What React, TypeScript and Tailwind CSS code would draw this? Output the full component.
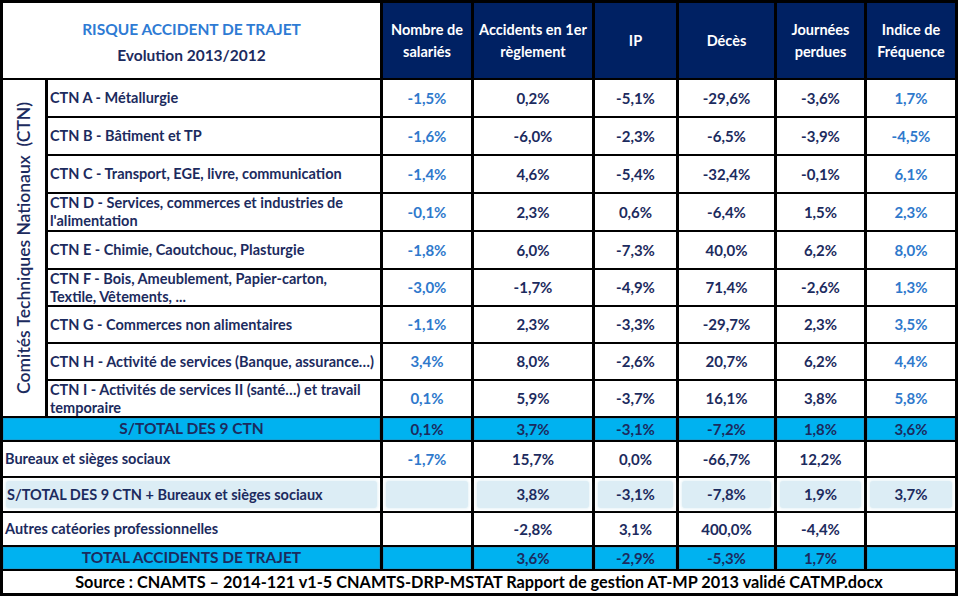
import { Fragment } from "react"

const navy = "text-[#1c2b5e]"

type Row = { name: string; values: string[] }

const ctnRows: Row[] = [
  { name: "CTN A - Métallurgie", values: ["-1,5%", "0,2%", "-5,1%", "-29,6%", "-3,6%", "1,7%"] },
  { name: "CTN B - Bâtiment et TP", values: ["-1,6%", "-6,0%", "-2,3%", "-6,5%", "-3,9%", "-4,5%"] },
  { name: "CTN C - Transport, EGE, livre, communication", values: ["-1,4%", "4,6%", "-5,4%", "-32,4%", "-0,1%", "6,1%"] },
  {
    name: "CTN D - Services, commerces et industries de l'alimentation",
    values: ["-0,1%", "2,3%", "0,6%", "-6,4%", "1,5%", "2,3%"],
  },
  { name: "CTN E - Chimie, Caoutchouc, Plasturgie", values: ["-1,8%", "6,0%", "-7,3%", "40,0%", "6,2%", "8,0%"] },
  {
    name: "CTN F - Bois, Ameublement, Papier-carton, Textile, Vêtements, ...",
    values: ["-3,0%", "-1,7%", "-4,9%", "71,4%", "-2,6%", "1,3%"],
  },
  { name: "CTN G - Commerces non alimentaires", values: ["-1,1%", "2,3%", "-3,3%", "-29,7%", "2,3%", "3,5%"] },
  {
    name: "CTN H - Activité de services (Banque, assurance…)",
    values: ["3,4%", "8,0%", "-2,6%", "20,7%", "6,2%", "4,4%"],
  },
  {
    name: "CTN I - Activités de services II (santé…) et travail temporaire",
    values: ["0,1%", "5,9%", "-3,7%", "16,1%", "3,8%", "5,8%"],
  },
]

const headers = ["Nombre de salariés", "Accidents en 1er règlement", "IP", "Décès", "Journées perdues", "Indice de Fréquence"]

function Cyan({ children, label }: { children?: React.ReactNode; label?: boolean }) {
  return (
    <div
      className={`${label ? "col-span-2 text-[15.5px]" : "text-[15px]"} flex items-center justify-center bg-[#00b2f0] border border-[#159fd3] font-bold ${navy}`}
    >
      {children}
    </div>
  )
}

function Light({ children, label }: { children?: React.ReactNode; label?: boolean }) {
  return (
    <div className={`${label ? "col-span-2" : ""} bg-white p-[3px] flex`}>
      <div
        className={`flex-1 flex items-center ${label ? "justify-start px-[1px] text-[14.5px]" : "justify-center text-[15px]"} bg-[#dcedf5] rounded-[3px] shadow-[0_0_3px_1px_#e6f3f8] font-bold ${navy}`}
      >
        {children}
      </div>
    </div>
  )
}

function Plain({ children, blue }: { children?: React.ReactNode; blue?: boolean }) {
  return (
    <div
      className={`bg-white flex items-center justify-center text-[15px] font-bold ${blue ? "text-[#2f79cc]" : navy}`}
    >
      {children}
    </div>
  )
}

export default function App() {
  return (
    <div className="w-[959px] h-[597px] bg-white font-['Lato',sans-serif]">
      <div className="w-[958px] bg-black p-[3px] grid grid-cols-[42px_332px_88px_118px_81px_95px_87px_88px] grid-rows-[75px_36px_36px_36px_36px_36px_35px_35px_35px_35px_22px_34px_33px_32px_22px_22px] gap-x-[3px] gap-y-[2px]">
        <div className="col-span-2 bg-white flex flex-col items-center justify-center leading-[26px] pt-[2px] text-[15.5px] font-bold">
          <span className="text-[#2e7bd4]">RISQUE ACCIDENT DE TRAJET</span>
          <span className={navy}>Evolution 2013/2012</span>
        </div>
        {headers.map((h) => (
          <div
            key={h}
            className="bg-[#002163] text-white text-[14.5px] font-bold leading-[22px] flex items-center justify-center text-center px-[2px]"
          >
            {h}
          </div>
        ))}

        <div className="row-span-9 bg-white flex items-center justify-center">
          <span
            className={`[writing-mode:vertical-rl] rotate-180 text-[17.5px] font-semibold whitespace-pre ${navy}`}
          >
            {"Comités Techniques Nationaux  (CTN)"}
          </span>
        </div>
        {ctnRows.map((r, i) => (
          <Fragment key={r.name}>
            <div className={`bg-white flex items-center pl-[2px] pr-1 text-[14.5px] font-bold leading-[18px] ${navy}`}>
              {r.name}
            </div>
            {r.values.map((v, j) => (
              <Plain key={i + "-" + j} blue={j === 0 || j === 5}>
                {v}
              </Plain>
            ))}
          </Fragment>
        ))}

        <Cyan label>S/TOTAL DES 9 CTN</Cyan>
        {["0,1%", "3,7%", "-3,1%", "-7,2%", "1,8%", "3,6%"].map((v, j) => (
          <Cyan key={"st" + j}>{v}</Cyan>
        ))}

        <div className={`col-span-2 bg-white flex items-center pl-[2px] text-[14.5px] font-bold ${navy}`}>
          Bureaux et sièges sociaux
        </div>
        {["-1,7%", "15,7%", "0,0%", "-66,7%", "12,2%", ""].map((v, j) => (
          <Plain key={"b" + j} blue={j === 0}>
            {v}
          </Plain>
        ))}

        <Light label>S/TOTAL DES 9 CTN + Bureaux et sièges sociaux</Light>
        {["", "3,8%", "-3,1%", "-7,8%", "1,9%", "3,7%"].map((v, j) => (
          <Light key={"l" + j}>{v}</Light>
        ))}

        <div className={`col-span-2 bg-white flex items-center pl-[2px] text-[14.5px] font-bold ${navy}`}>
          Autres catéories professionnelles
        </div>
        {["", "-2,8%", "3,1%", "400,0%", "-4,4%", ""].map((v, j) => (
          <Plain key={"a" + j}>{v}</Plain>
        ))}

        <Cyan label>TOTAL ACCIDENTS DE TRAJET</Cyan>
        {["", "3,6%", "-2,9%", "-5,3%", "1,7%", ""].map((v, j) => (
          <Cyan key={"t" + j}>{v}</Cyan>
        ))}

        <div className="col-span-8 bg-white flex items-center justify-center text-[16.3px] font-bold text-black">
          Source : CNAMTS – 2014-121 v1-5 CNAMTS-DRP-MSTAT Rapport de gestion AT-MP 2013 validé CATMP.docx
        </div>
      </div>
    </div>
  )
}
